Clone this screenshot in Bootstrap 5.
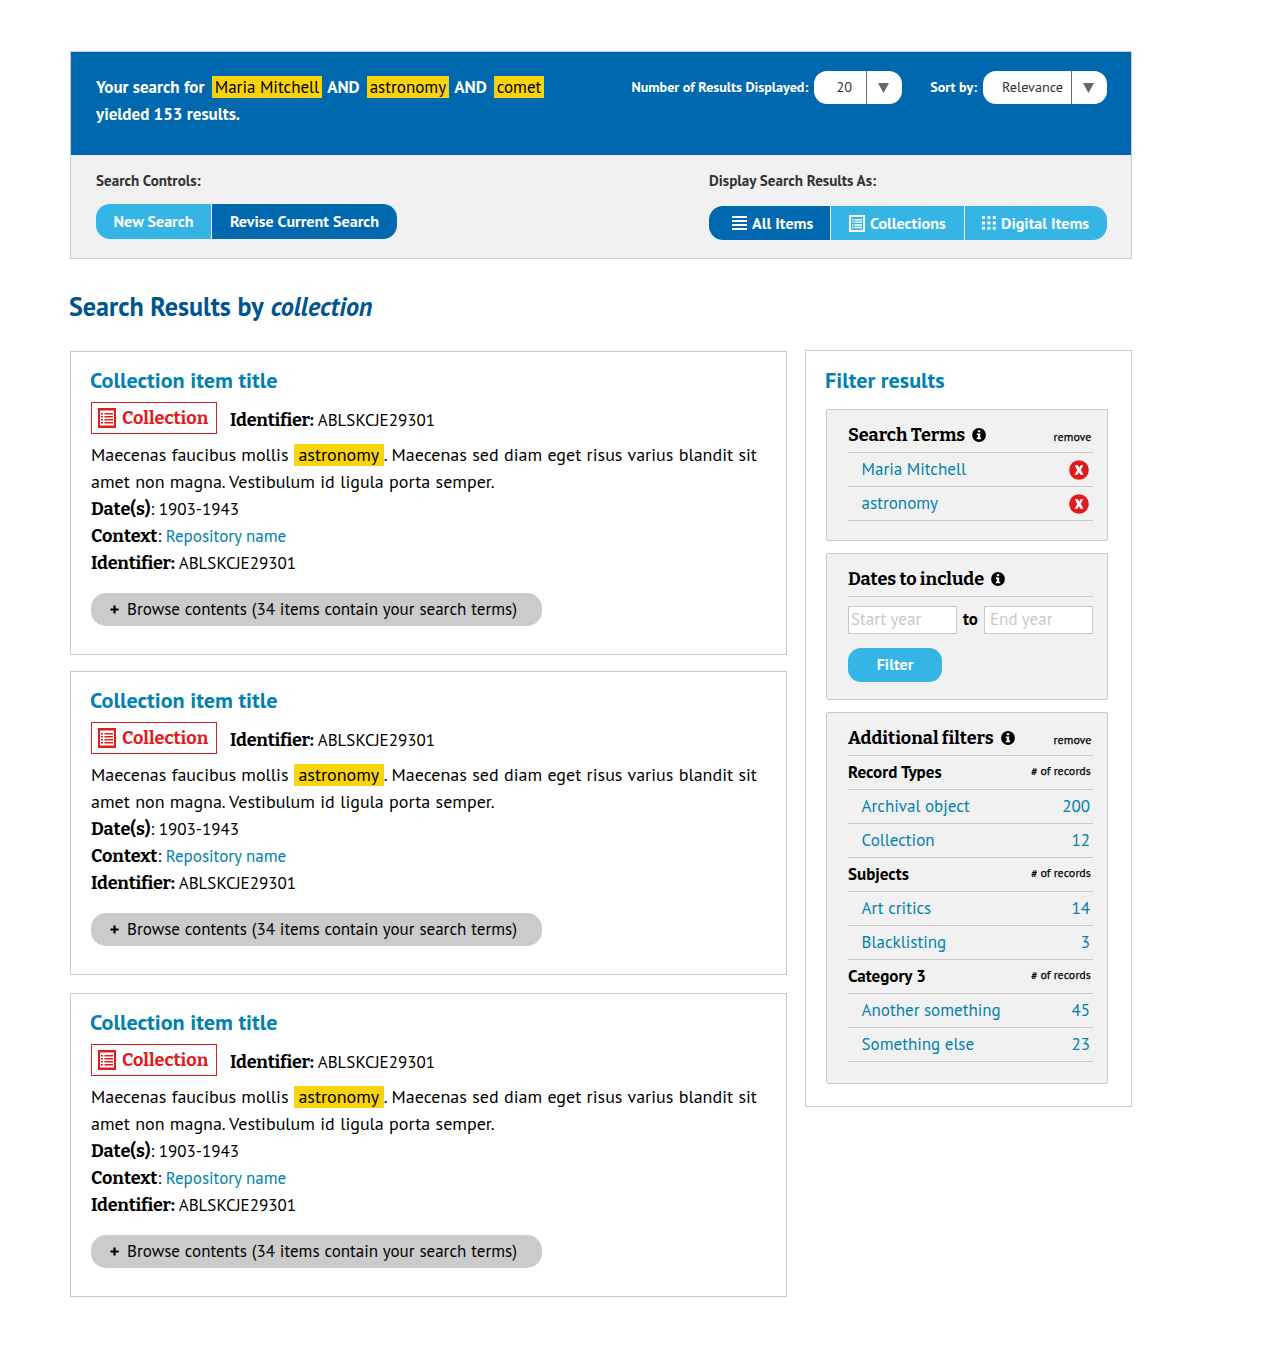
<!DOCTYPE html>
<html lang="en">
<head>
<meta charset="utf-8">
<meta name="viewport" content="width=device-width, initial-scale=1">
<title>Search Results</title>
<link href="https://cdn.jsdelivr.net/npm/bootstrap@5.3.0/dist/css/bootstrap.min.css" rel="stylesheet">
<style>
  :root { --navy:#0068ae; --sky:#34b5e5; --teal:#0081b0; --line:#c9c9c9; --panel:#f1f1f1; --alert:#e31a1c; --hl:#f8d408; }
  body { font-family:"PT Sans","Noto Sans",sans-serif; font-size:17px; line-height:27px; color:#000; background:#fff; }
  .page { width:1062px; margin:51px 0 0 70px; }
  a { color:var(--teal); text-decoration:none; }
  .slab { font-family:"Roboto Slab","Bitter","DejaVu Serif Condensed",serif; font-weight:700; font-size:18px; }
  .slab.ident { letter-spacing:-.27px; }
  .hit { display:inline-block; background:var(--hl); color:#000; font-weight:400; line-height:22px; }

  .search-head { border:1px solid var(--line); }
  .summary { background:var(--navy); color:#fff; height:103px; padding:19px 24px 0 25px; font-weight:700; }
  .summary p { padding-top:3px; width:480px; }
  .summary .hit { padding:0 3px; margin:0 1.5px 0 3px; }
  .picker-label { font-size:14.1px; }
  .picker-label.lead-gap { margin-left:28px; }
  .picker { height:33px; border-radius:13px; background:#fff; color:#333; font-weight:400; font-size:14.2px; overflow:hidden; margin-left:6px; }
  .picker.count { width:88px; }
  .picker.order { width:124px; }
  .picker .arrow { width:36px; border-left:1px solid #666; padding-right:3px; }
  .controls { background:var(--panel); height:103px; padding:13px 24px 0 25px; color:#333; }
  .controls .caption { font-size:15.1px; line-height:26px; font-weight:700; }
  .pill-group { border-radius:14px; overflow:hidden; gap:1px; background:#fff; }
  .pill-group.edit { width:301px; height:35px; margin-top:10px; }
  .pill-group.view { width:398px; height:34px; margin-top:12px; }
  .pill-btn { border:0; padding:0; color:#fff; background:var(--sky); font-weight:700; font-size:16.1px; line-height:20px; }
  .pill-btn.on { background:var(--navy); }
  .edit .pill-btn { padding-bottom:2px; }
  .view .pill-btn svg { margin-right:5px; }

  h1 { font-size:26.1px; font-weight:700; color:#005590; margin:29px 0 27px -1px; line-height:36px; }
  h1 em { margin-left:1.5px; }
  h2 { font-size:22.1px; font-weight:700; color:var(--teal); margin:0 0 8px -1px; line-height:28px; }
  .results { width:717px; }
  .item { border:1px solid var(--line); height:304px; padding:14px 20px 0; margin-bottom:16px; }
  .item + .item { margin-bottom:18px; }
  .tag { border:1px solid var(--alert); color:var(--alert); height:32px; width:126px; padding-left:6px; margin-right:13px; gap:6px; }
  .desc { font-size:18px; word-spacing:.55px; margin:7px 0 1px; white-space:nowrap; }
  .desc .hit { padding:0 4.5px; }
  .browse { height:33px; width:451px; border-radius:15px; background:#cbcbcb; margin-top:16px; padding:0 0 1px 19px; border:0; gap:8px; word-spacing:.3px; }

  .filters { width:327px; border:1px solid var(--line); height:757px; padding:15px 0 0 20px; margin-top:-1px; }
  .filters h2 { margin-bottom:15px; }
  .fbox { width:282px; border:1px solid var(--line); border-radius:2px; background:var(--panel); padding:8px 14px 0 21px; margin-bottom:12px; }
  .fbox.terms { height:132px; }
  .fbox.dates { height:147px; }
  .fbox.more { height:372px; }
  .frow { height:34px; border-bottom:1px solid var(--line); padding-right:3px; }
  .frow.entry { padding-left:13.6px; }
  .frow.entry svg { margin-right:1px; }
  .frow.group { padding-right:2px; }
  .frow.head { height:35px; padding-right:1.5px; }
  .frow.head svg { margin-left:7px; }
  .tiny { font-family:"PT Sans Caption","PT Sans",sans-serif; font-size:10.2px; line-height:14px; letter-spacing:.08px; -webkit-text-stroke:.25px #000; }
  .head .tiny { padding-top:6px; }
  .group .tiny { padding-bottom:2px; }
  .year { width:109px; height:28px; border:1px solid var(--line); border-radius:0; background:#fff; padding:0 2px 3px; font-size:17px; color:#000; }
  .year.end { padding-left:5px; }
  .year::placeholder { color:#c9c9c9; opacity:1; }
  .range { margin-top:9px; line-height:24px; }
  .range b { padding-bottom:3px; }
  .go { width:94px; height:34px; border-radius:13px; margin-top:14px; padding-bottom:3px; }
</style>
</head>
<body>
<svg width="0" height="0" class="d-none">
  <symbol id="i-list" viewBox="0 0 16 17"><path fill="currentColor" fill-rule="evenodd" d="M0 0H16V17H0ZM2 2V15H14V2Z"/><path fill="currentColor" d="M3.2 4H4.6V5.5H3.2ZM5.6 4H13V5.5H5.6ZM3.2 6.6H4.6V8.1H3.2ZM5.6 6.6H13V8.1H5.6ZM3.2 9.2H4.6V10.7H3.2ZM5.6 9.2H13V10.7H5.6ZM3.2 11.8H4.6V13.3H3.2ZM5.6 11.8H13V13.3H5.6Z"/></symbol>
  <symbol id="i-sheet" viewBox="0 0 18 20"><path fill="currentColor" fill-rule="evenodd" d="M0 0H18V20H0ZM2 2.5V17.5H16V2.5Z"/><path fill="currentColor" d="M3 5H5V6.5H3ZM6.5 5H15V6.5H6.5ZM3 8H5V9.5H3ZM6.5 8H15V9.5H6.5ZM3 11H5V12.5H3ZM6.5 11H15V12.5H6.5ZM3 14H5V15.5H3ZM6.5 14H15V15.5H6.5Z"/></symbol>
  <symbol id="i-rows" viewBox="0 0 15 14"><path fill="currentColor" d="M0 0H15V2H0ZM0 4H15V6H0ZM0 8H15V10H0ZM0 12H15V14H0Z"/></symbol>
  <symbol id="i-grid" viewBox="0 0 14 14"><path fill="currentColor" d="M0 0H3V3H0ZM5.4 0H8.4V3H5.4ZM10.8 0H13.8V3H10.8ZM0 5.4H3V8.4H0ZM5.4 5.4H8.4V8.4H5.4ZM10.8 5.4H13.8V8.4H10.8ZM0 10.8H3V13.8H0ZM5.4 10.8H8.4V13.8H5.4ZM10.8 10.8H13.8V13.8H10.8Z"/></symbol>
  <symbol id="i-info" viewBox="0 0 14 14"><circle cx="7" cy="7" r="6.9"/><path fill="#fff" d="M5.8 2.2H8.2V4.3H5.8ZM4.8 5.4H8.2V9.8H9.2V11.3H4.8V9.8H5.8V6.9H4.8Z"/></symbol>
  <symbol id="i-remove" viewBox="0 0 20 20"><circle cx="10" cy="10" r="9.8" fill="#e31a1c"/><path fill="#fff" d="M5.8 5.2H9L10.2 7.8 11.5 5.2H14.3L11.8 9.8 14.5 14.8H11.3L9.9 11.9 8.4 14.8H5.6L8.3 9.9Z"/></symbol>
  <symbol id="i-down" viewBox="0 0 11 10"><path fill="#666" d="M0 0H11L5.5 10Z"/></symbol>
  <symbol id="i-plus" viewBox="0 0 9 9"><path d="M3.4 0.4H5.6V3.5H8.6V5.5H5.6V8.6H3.4V5.5H0.4V3.5H3.4Z"/></symbol>
</svg>

<div class="page">
  <header class="search-head">
    <div class="summary d-flex justify-content-between align-items-start">
      <p class="mb-0">Your search for <span class="hit">Maria Mitchell</span> AND <span class="hit">astronomy</span> AND <span class="hit">comet</span><br>yielded 153 results.</p>
      <div class="d-flex align-items-center">
        <span class="picker-label">Number of Results Displayed:</span>
        <div class="picker count d-flex">
          <span class="flex-fill d-flex align-items-center justify-content-center ps-2">20</span>
          <span class="arrow d-flex align-items-center justify-content-center"><svg width="11" height="10"><use href="#i-down"/></svg></span>
        </div>
        <span class="picker-label lead-gap">Sort by:</span>
        <div class="picker order d-flex">
          <span class="flex-fill d-flex align-items-center justify-content-end pe-2">Relevance</span>
          <span class="arrow d-flex align-items-center justify-content-center"><svg width="11" height="10"><use href="#i-down"/></svg></span>
        </div>
      </div>
    </div>
    <div class="controls d-flex justify-content-between">
      <div>
        <div class="caption">Search Controls:</div>
        <div class="pill-group edit d-flex">
          <button class="pill-btn" style="width:115px">New Search</button>
          <button class="pill-btn on flex-fill">Revise Current Search</button>
        </div>
      </div>
      <div>
        <div class="caption">Display Search Results As:</div>
        <div class="pill-group view d-flex">
          <button class="pill-btn on d-flex align-items-center" style="width:121px;padding-left:23px"><svg width="15" height="14"><use href="#i-rows"/></svg>All Items</button>
          <button class="pill-btn d-flex align-items-center" style="width:133px;padding-left:18px"><svg width="16" height="17"><use href="#i-list"/></svg>Collections</button>
          <button class="pill-btn d-flex align-items-center flex-fill" style="padding-left:17px"><svg width="14" height="14"><use href="#i-grid"/></svg>Digital Items</button>
        </div>
      </div>
    </div>
  </header>

  <h1>Search Results by <em>collection</em></h1>

  <div class="d-flex justify-content-between align-items-start">
    <main class="results">
      <article class="item">
        <h2>Collection item title</h2>
        <div class="d-flex align-items-center">
          <span class="tag slab d-flex align-items-center"><svg width="18" height="20"><use href="#i-sheet"/></svg>Collection</span>
          <span class="pt-1"><span class="slab ident">Identifier:</span> ABLSKCJE29301</span>
        </div>
        <div class="desc">Maecenas faucibus mollis <span class="hit">astronomy</span>. Maecenas sed diam eget risus varius blandit sit<br>amet non magna. Vestibulum id ligula porta semper.</div>
        <div><span class="slab">Date(s)</span>: 1903-1943</div>
        <div><span class="slab">Context</span>: <a href="#">Repository name</a></div>
        <div><span class="slab ident">Identifier:</span> ABLSKCJE29301</div>
        <button class="browse d-flex align-items-center"><svg width="9" height="9"><use href="#i-plus"/></svg>Browse contents (34 items contain your search terms)</button>
      </article>
      <article class="item">
        <h2>Collection item title</h2>
        <div class="d-flex align-items-center">
          <span class="tag slab d-flex align-items-center"><svg width="18" height="20"><use href="#i-sheet"/></svg>Collection</span>
          <span class="pt-1"><span class="slab ident">Identifier:</span> ABLSKCJE29301</span>
        </div>
        <div class="desc">Maecenas faucibus mollis <span class="hit">astronomy</span>. Maecenas sed diam eget risus varius blandit sit<br>amet non magna. Vestibulum id ligula porta semper.</div>
        <div><span class="slab">Date(s)</span>: 1903-1943</div>
        <div><span class="slab">Context</span>: <a href="#">Repository name</a></div>
        <div><span class="slab ident">Identifier:</span> ABLSKCJE29301</div>
        <button class="browse d-flex align-items-center"><svg width="9" height="9"><use href="#i-plus"/></svg>Browse contents (34 items contain your search terms)</button>
      </article>
      <article class="item">
        <h2>Collection item title</h2>
        <div class="d-flex align-items-center">
          <span class="tag slab d-flex align-items-center"><svg width="18" height="20"><use href="#i-sheet"/></svg>Collection</span>
          <span class="pt-1"><span class="slab ident">Identifier:</span> ABLSKCJE29301</span>
        </div>
        <div class="desc">Maecenas faucibus mollis <span class="hit">astronomy</span>. Maecenas sed diam eget risus varius blandit sit<br>amet non magna. Vestibulum id ligula porta semper.</div>
        <div><span class="slab">Date(s)</span>: 1903-1943</div>
        <div><span class="slab">Context</span>: <a href="#">Repository name</a></div>
        <div><span class="slab ident">Identifier:</span> ABLSKCJE29301</div>
        <button class="browse d-flex align-items-center"><svg width="9" height="9"><use href="#i-plus"/></svg>Browse contents (34 items contain your search terms)</button>
      </article>
    </main>

    <aside class="filters">
      <h2>Filter results</h2>
      <section class="fbox terms">
        <div class="frow head d-flex align-items-center"><span class="slab">Search Terms</span><svg width="14" height="14"><use href="#i-info"/></svg><span class="tiny ms-auto">remove</span></div>
        <div class="frow entry d-flex align-items-center justify-content-between"><a href="#">Maria Mitchell</a><svg width="20" height="20"><use href="#i-remove"/></svg></div>
        <div class="frow entry d-flex align-items-center justify-content-between"><a href="#">astronomy</a><svg width="20" height="20"><use href="#i-remove"/></svg></div>
      </section>
      <section class="fbox dates">
        <div class="frow head d-flex align-items-center"><span class="slab">Dates to include</span><svg width="14" height="14"><use href="#i-info"/></svg></div>
        <div class="range d-flex align-items-center justify-content-between"><input class="year" placeholder="Start year"><b>to</b><input class="year end" placeholder="End year"></div>
        <button class="pill-btn go">Filter</button>
      </section>
      <section class="fbox more">
        <div class="frow head d-flex align-items-center"><span class="slab">Additional filters</span><svg width="14" height="14"><use href="#i-info"/></svg><span class="tiny ms-auto">remove</span></div>
        <div class="frow group d-flex align-items-center justify-content-between"><b>Record Types</b><span class="tiny"># of records</span></div>
        <div class="frow entry d-flex align-items-center justify-content-between"><a href="#">Archival object</a><a href="#">200</a></div>
        <div class="frow entry d-flex align-items-center justify-content-between"><a href="#">Collection</a><a href="#">12</a></div>
        <div class="frow group d-flex align-items-center justify-content-between"><b>Subjects</b><span class="tiny"># of records</span></div>
        <div class="frow entry d-flex align-items-center justify-content-between"><a href="#">Art critics</a><a href="#">14</a></div>
        <div class="frow entry d-flex align-items-center justify-content-between"><a href="#">Blacklisting</a><a href="#">3</a></div>
        <div class="frow group d-flex align-items-center justify-content-between"><b>Category 3</b><span class="tiny"># of records</span></div>
        <div class="frow entry d-flex align-items-center justify-content-between"><a href="#">Another something</a><a href="#">45</a></div>
        <div class="frow entry d-flex align-items-center justify-content-between"><a href="#">Something else</a><a href="#">23</a></div>
      </section>
    </aside>
  </div>
</div>
<script src="https://cdn.jsdelivr.net/npm/bootstrap@5.3.0/dist/js/bootstrap.bundle.min.js"></script>
</body>
</html>
